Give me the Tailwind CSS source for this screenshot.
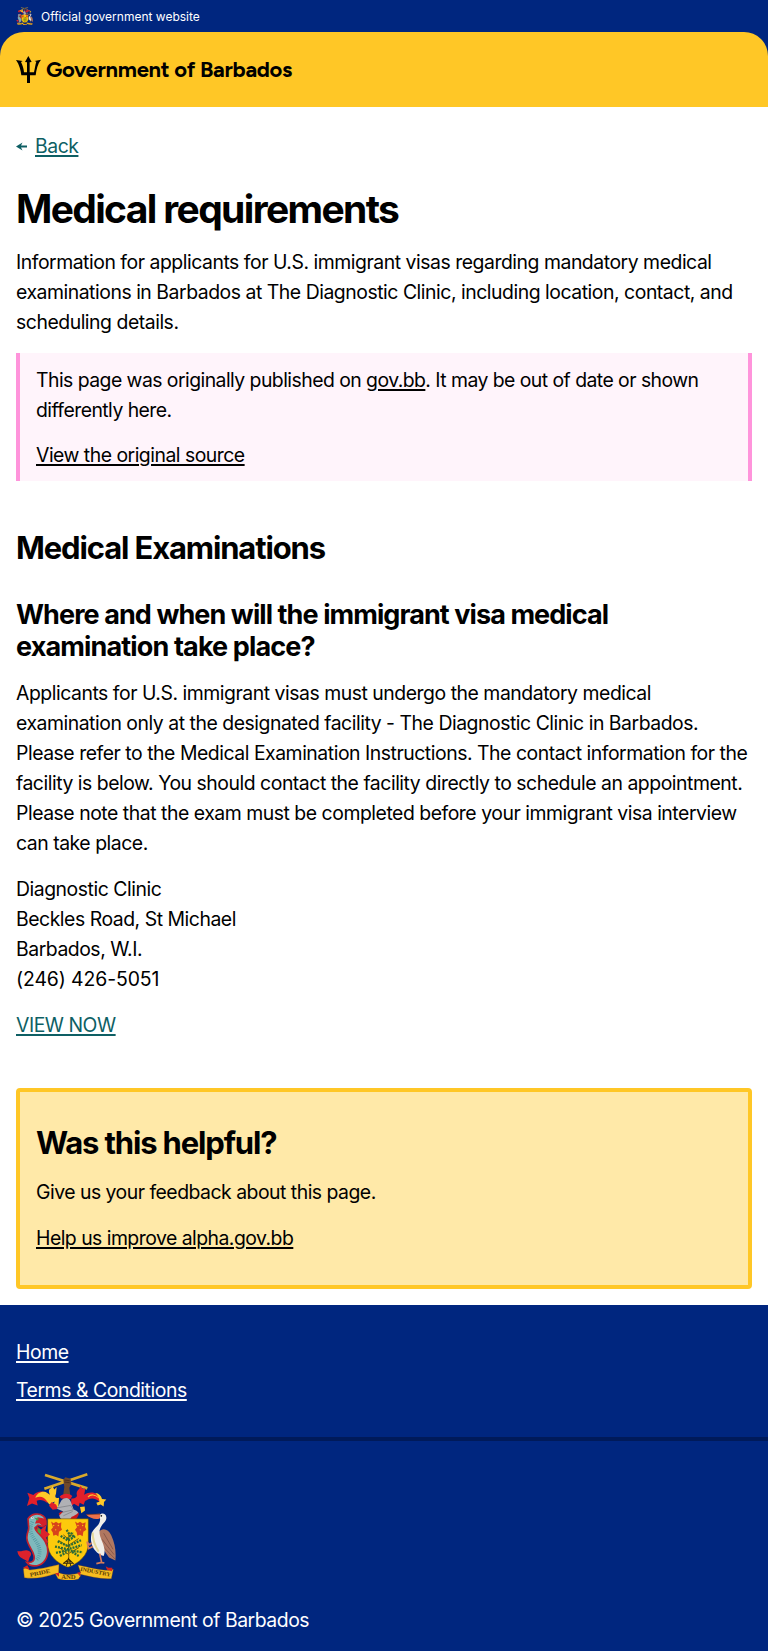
<!DOCTYPE html>
<html lang="en">
<head>
<meta charset="utf-8">
<title>Medical requirements</title>
<script src="https://cdn.jsdelivr.net/npm/@tailwindcss/browser@4"></script>
</head>
<body class="bg-white text-black font-['Inter','Liberation_Sans',sans-serif] text-[19.4px] leading-[30px] tracking-[-0.465px] whitespace-nowrap">
<svg class="hidden">
<symbol id="arms" viewBox="48 42 300 320" preserveAspectRatio="none">
  <g stroke="#d9a92c" stroke-width="8"><path d="M135 48L262 88M133 89L262 46"/></g>
  <path d="M190 62l6-7 16 4 2 16-6 11 4 32h-24l5-34z" fill="#70482b"/>
  <path d="M193 63l16 2M193 69l16 2" stroke="#3c2518" stroke-width="2"/>
  <path d="M150 112c-12-18-36-20-50-4l-18-7 6 16-7 24 15-8 17 6-3-14c10-5 22-2 32 7z" fill="#e3202a"/>
  <path d="M106 116c5-13 17-20 31-17l13 8c-5-9-4-17 4-20l3-7 6 11 7-7-2 20c-5 10-1 15 9 12l-2 31-15-8 4-12-16 9-10-13c-6-9-16-13-32-7z" fill="#ffc928"/>
  <path d="M147 140l8-11 14 8 4 13-15 2z" fill="#e3202a"/>
  <path d="M214 118c8 2 14-1 17-7-3-10 0-17 7-22l4-9 6 10 8-3c-2 9-1 15-4 20 20-12 43-7 50 12l-5 8c-16-15-31-8-42-1l-4 11-12-6-3 11-14-8-9 8z" fill="#e3202a"/>
  <path d="M264 114c8-10 22-8 32 2" fill="none" stroke="#ffc928" stroke-width="3"/>
  <path d="M286 102c11 1 18 8 20 18l13 1-7 8-1 13-9-6-9 3-4-8 9-3c0-10-4-18-12-26zM240 144l14-2 1 12-11 8z" fill="#ffc928"/>
  <path d="M179 112c12-10 26-11 38-1l-6 9-28-2z" fill="#e3202a"/>
  <path d="M176 163c4 14 17 25 31 24 20-1 28-14 30-25l-10-6-45 2z" fill="#c8161d"/>
  <path d="M184 124c13-12 24-7 28 3l9 24c8 3 13 6 14 10-7 6-14 10-20 12l-9 14c-16-1-27-9-28-18l12-12-19-8z" fill="#b0b1b5"/>
  <path d="M172 146l40-7 8 13-34 8M190 170l28-13" fill="none" stroke="#77787d" stroke-width="2"/>
  <path d="M143 179h122v75c0 33-28 58-61 70-33-12-61-37-61-70z" fill="#fdca0c" stroke="#513b0b" stroke-width="1.5"/>
  <g fill="#d8431b"><path d="M153 187l8 5 7-4 8 5 8-4-1 15 3 8-9 6-2 14-7-5-8 3-2-11-5-7 6-8z"/><path d="M225 187l8 5 7-4 8 5 9-4-2 14 4 9-9 6-2 13-8-4-8 3-2-11-5-7 6-8z"/></g>
  <g fill="#fdca0c"><circle cx="161" cy="199" r="2"/><circle cx="175" cy="199" r="2"/><circle cx="167" cy="212" r="2"/><circle cx="234" cy="199" r="2"/><circle cx="248" cy="199" r="2"/><circle cx="241" cy="212" r="2"/></g>
  <g fill="none" stroke="#34270d" stroke-width="2"><path d="M206 310c1-22-2-50 1-88M205 285l-27-20M207 282l30-17M206 263l-30-19M206 258l30-20M206 240l-16-13M207 234l13-12"/></g>
  <g fill="none" stroke="#2b6b36"><path stroke-width="7" stroke-dasharray="6 3" d="M200 212l10 17-8 12M213 220l8 14M182 230l22 14 24-14M173 246l31 15 39-18M165 262l38 8 42-12M168 281l35-8 45 6M180 290l19-10M216 278l20 12"/></g>
  <path d="M206 300l-17 13M207 300l14 14M206 296l-7 24M208 300l4 20M191 312h29" fill="none" stroke="#34270d" stroke-width="3"/>
  <path d="M123 211l17-15-4 19 14 10-12 11 7 14c-15 3-24-4-27-14zM50 275c15 5 24-6 37 0 10 6 7 12 2 19l-5 15c-8-12-29-9-32-34z" fill="#dc222c"/>
  <path d="M84 179c10-17 34-18 46-8 13 12 8 24-2 31l-14-4-9 8c1 11 22 24 31 42 12 21 9 47-6 61-15 14-39 15-50 0 19 3 26-6 21-23-4-15-18-28-20-46-3-20 8-27 5-37z" fill="#7fb9bd" stroke="#c4202c" stroke-width="5"/>
  <path d="M97 188c-9 20-7 35 8 54 17 22 19 45 4 60" fill="none" stroke="#4e949e" stroke-width="11" stroke-dasharray="2 4"/>
  <path d="M113 174l23 5 5 17-13 5-10-9-13 1zM111 201l12 10-3 15-13-12z" fill="#d51f2a"/>
  <path d="M113 206l10 7-1 13-9-8zM103 176l14 2-5 7z" fill="#42a044"/>
  <circle cx="97" cy="176" r="3.5" fill="#fff"/><circle cx="97" cy="176" r="1.5" fill="#222"/>
  <path d="M296 218c12-14 29-9 38 11 11 24 15 49 12 75l-19-9-28-40z" fill="#b07760"/>
  <path d="M311 222l28 48M306 240l36 46M304 257l41 42" stroke="#744840" stroke-width="2"/>
  <path d="M298 168c8-9 20-4 21 6 1 12-8 16-15 27-9 14-6 25 2 45 8 19 10 32 5 44-19-4-36-23-38-47-1-21 6-31 17-41 10-9 13-20 8-34z" fill="#f1efe9"/>
  <path d="M278 220c0 21 6 39 18 57" fill="none" stroke="#e5d89a" stroke-width="6"/>
  <path d="M258 166l42-2v13c-12 6-29 1-42-11z" fill="#ed7049"/>
  <path d="M258 166l43-1" stroke="#6b2d1d" stroke-width="2"/>
  <circle cx="304" cy="170" r="2.5" fill="#111"/>
  <path d="M279 262l-13 6-5-21M261 249l8 7 6-5M299 283l6 26-16 4M305 310l8 1" fill="none" stroke="#d47a59" stroke-width="5"/>
  <path d="M70 328l13-5 5 9c30-2 56-8 89-16l-1 24c10 3 20 6 30 6 13-1 25-3 36-6l-8-23c33 7 65 16 92 16l14-3-6 28c-32 2-64-6-93-13v6c-3 3-4 6-5 8-20 6-42 5-62-1l-8-15c-27 9-60 17-93 12z" fill="#f6bd20" stroke="#7d420c" stroke-width="1"/>
  <path d="M69 325l13-7 7 13zM165 342l12-2v12zM231 340l11-2-2 13zM317 321l8 4 12 0-1 11-15-5z" fill="#d52420"/>
  <g font-family="Liberation Serif, serif" font-weight="700" font-size="17" fill="#5a3c08"><text x="91" y="352" textLength="61" lengthAdjust="spacingAndGlyphs" transform="rotate(-11 91 352)">PRIDE</text><text x="184" y="359" textLength="42" lengthAdjust="spacingAndGlyphs">AND</text><text x="240" y="334" textLength="92" lengthAdjust="spacingAndGlyphs" transform="rotate(11 240 334)">INDUSTRY</text></g>
</symbol>
</svg>
<div class="bg-[#00267f]">
  <div class="flex h-8 items-center gap-2 px-4 text-[12px] leading-4 text-white">
    <svg class="h-[18px] w-[17px]"><use href="#arms"/></svg>
    <span class="pt-0.5 text-[12px] tracking-[0px]">Official government website</span>
  </div>
  <header class="flex h-[75px] items-center rounded-t-[24px] bg-[#ffc726] px-4">
    <svg class="h-[27px] w-[25px]" viewBox="48 168 75 81"><path d="M85 168l10 18-6 1v30h13c3-13 4-24 7-32l-5-2 19-4c-10 12-14 30-16 47H90v23h-9v-23H64c-2-16-6-32-16-46l20 3-5 3c5 10 8 19 9 31h9v-30l-6-1z"/></svg>
    <span class="ml-[5px] font-['Figtree','Inter',sans-serif] text-[22px] font-bold tracking-[-0.3px]">Government of Barbados</span>
  </header>
</div>
<main class="px-4 pt-6">
  <nav class="flex items-center gap-2 text-[#0e5f64]">
    <svg class="h-[9px] w-[11px]" viewBox="0 0 11 9"><path d="M0 4.5L6.5.5 5 3.5h6v2H5l1.5 3z" fill="currentColor"/></svg>
    <a class="underline decoration-2 underline-offset-2">Back</a>
  </nav>
  <h1 class="mt-[23px] text-[39px] leading-[50px] font-bold tracking-[-1.65px]">Medical requirements</h1>
  <p class="mt-[13px]">Information for applicants for U.S. immigrant visas regarding mandatory medical<br>examinations in Barbados at The Diagnostic Clinic, including location, contact, and<br>scheduling details.</p>
  <aside class="mt-4 h-32 border-x-4 border-[#ff94db] bg-[#fff4fb] px-4 pt-3">
    <p class="tracking-[-0.54px]">This page was originally published on <a class="underline decoration-2 underline-offset-2">gov.bb</a>. It may be out of date or shown<br>differently here.</p>
    <p class="mt-[15px] tracking-[-0.5px]"><a class="underline decoration-2 underline-offset-2">View the original source</a></p>
  </aside>
  <h2 class="mt-[47px] text-[31px] leading-10 font-bold tracking-[-1.14px]">Medical Examinations</h2>
  <h3 class="mt-[31px] text-[27px] leading-8 font-bold tracking-[-0.92px]">Where and when will the immigrant visa medical<br><span class="tracking-[-0.86px]">examination take place?</span></h3>
  <p class="mt-[15px]">Applicants for U.S. immigrant visas must undergo the mandatory medical<br>examination only at the designated facility - The Diagnostic Clinic in Barbados.<br>Please refer to the Medical Examination Instructions. The contact information for the<br>facility is below. You should contact the facility directly to schedule an appointment.<br>Please note that the exam must be completed before your immigrant visa interview<br>can take place.</p>
  <p class="mt-4">Diagnostic Clinic<br>Beckles Road, St Michael<br>Barbados, W.I.<br><span class="tracking-[-0.1px]">(246) 426-5051</span></p>
  <p class="mt-4"><a class="text-[#0e5f64] underline decoration-2 underline-offset-2">VIEW NOW</a></p>
  <section class="mt-12 mb-4 h-[201px] rounded border-4 border-[#ffc726] bg-[#ffe9a8] px-4 pt-[31px]">
    <h2 class="text-[31px] leading-10 font-bold tracking-[-1.15px]">Was this helpful?</h2>
    <p class="mt-[14px] tracking-[-0.5px]">Give us your feedback about this page.</p>
    <p class="mt-4 tracking-[-0.52px]"><a class="underline decoration-2 underline-offset-2">Help us improve alpha.gov.bb</a></p>
  </section>
</main>
<footer class="h-[346px] bg-[#00267f] text-white">
  <nav class="flex h-[136px] flex-col gap-2 border-b-4 border-[#001a5a] px-4 pt-8 tracking-[-0.44px]">
    <a class="underline decoration-2 underline-offset-2">Home</a>
    <a class="underline decoration-2 underline-offset-2">Terms &amp; Conditions</a>
  </nav>
  <div class="px-4 pt-8">
    <svg class="h-[107px] w-[100px]"><use href="#arms"/></svg>
    <p class="mt-[25px]">© 2025 Government of Barbados</p>
  </div>
</footer>
</body>
</html>
